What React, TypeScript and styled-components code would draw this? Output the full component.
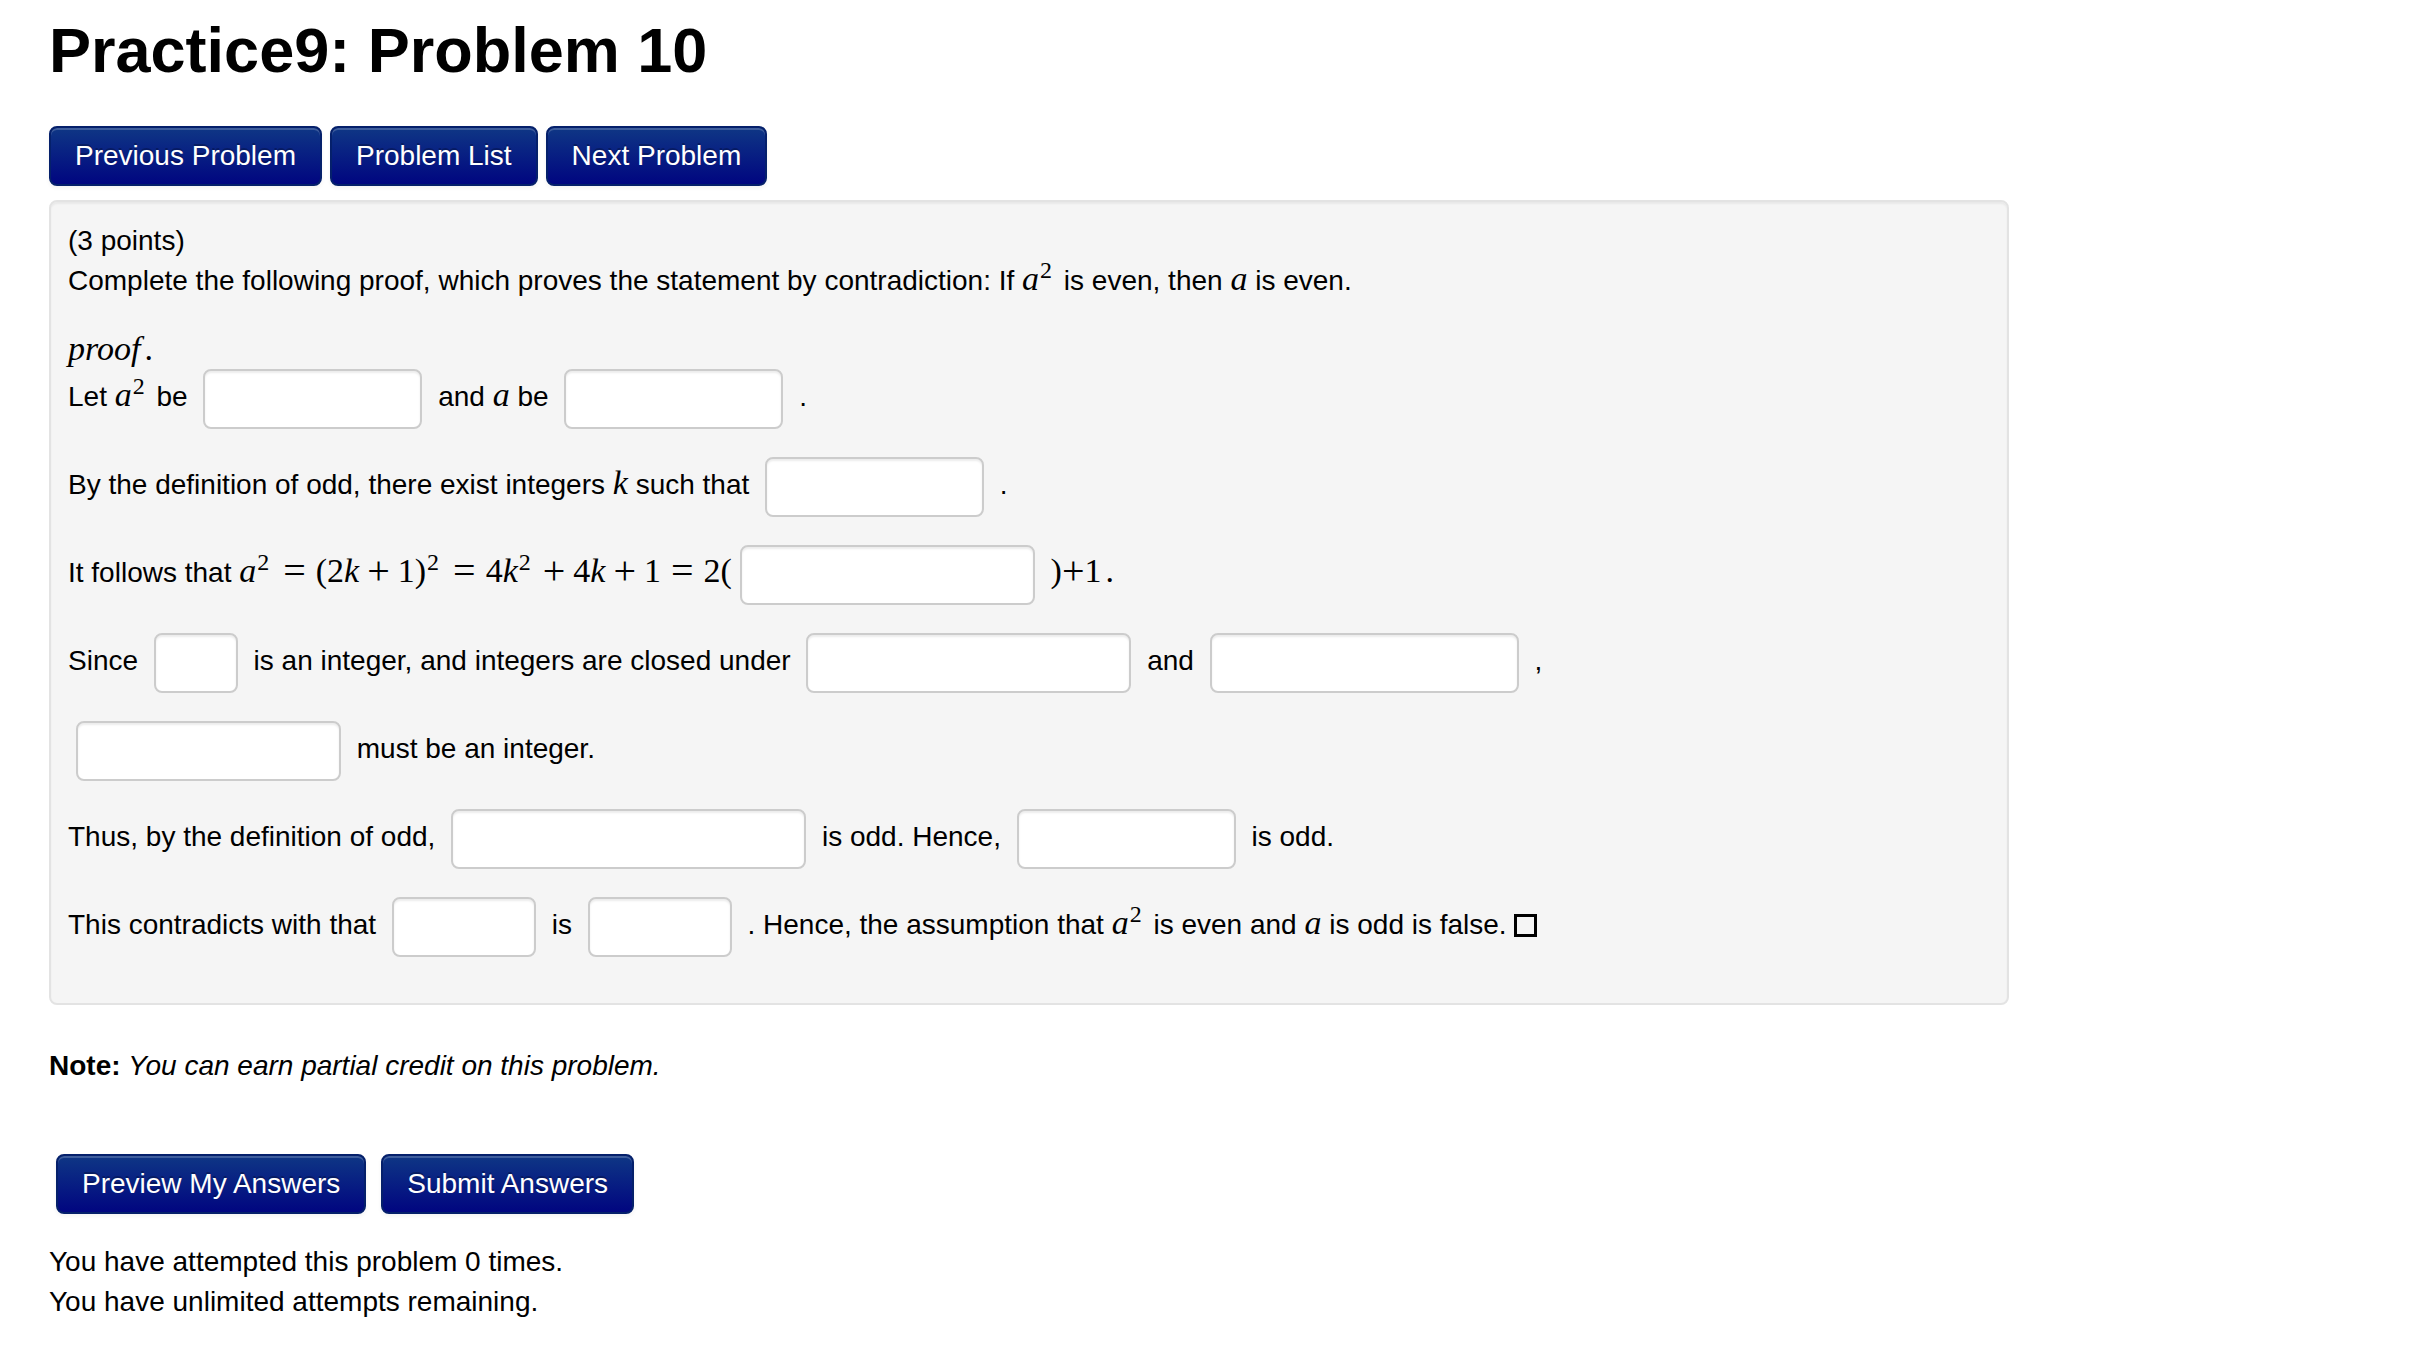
import React from "react";
import styled, { createGlobalStyle } from "styled-components";

const GlobalStyle = createGlobalStyle`
  *, *::before, *::after { box-sizing: border-box; }
  body {
    margin: 0;
    background: #fff;
    color: #000;
    font-family: "Liberation Sans", Arial, sans-serif;
    font-size: 28px;
    line-height: 40px;
  }
`;

const Page = styled.main`
  padding: 10px 15px 30px 49px;
`;

const Title = styled.h1`
  margin: 0 0 36px;
  font-size: 63px;
  line-height: 80px;
  font-weight: 700;
`;

const Nav = styled.nav`
  display: flex;
  flex-wrap: wrap;
  gap: 8px;
  margin-bottom: 14px;
`;

const Button = styled.button`
  padding: 8px 24px;
  border: 2px solid #05206b;
  border-radius: 8px;
  background: linear-gradient(to bottom, #0f3885, #000480) border-box;
  box-shadow: inset 0 2px 0 rgba(255, 255, 255, 0.2), 0 2px 4px rgba(0, 0, 0, 0.05);
  color: #fff;
  font: inherit;
  text-shadow: 0 -2px 0 rgba(0, 0, 0, 0.25);
  cursor: pointer;
`;

const Problem = styled.section`
  width: 83%;
  padding: 19px 17px 18px;
  border: 2px solid #e3e3e3;
  border-radius: 8px;
  background: #f5f5f5;
  box-shadow: inset 0 2px 2px rgba(0, 0, 0, 0.05);
`;

const Line = styled.p`
  margin: 0 0 28px;
`;

const Blank = styled.input<{ $width: number }>`
  width: ${(p) => p.$width}px;
  height: 60px;
  margin: 0 8px;
  padding: 8px 12px;
  border: 2px solid #ccc;
  border-radius: 8px;
  background: #fff;
  box-shadow: inset 0 2px 2px rgba(0, 0, 0, 0.075);
  color: #555;
  font: inherit;
  vertical-align: middle;
`;

const MathText = styled.span`
  font-family: "Liberation Serif", "Times New Roman", serif;
  font-size: 34px;
  line-height: 0;
`;

const ProofHeading = styled.div`
  font-family: "Liberation Serif", "Times New Roman", serif;
  font-size: 34px;
`;

const Var = styled.i`
  font-family: "Liberation Serif", "Times New Roman", serif;
  font-size: 34px;
  line-height: 0;
`;

const Power = styled.sup`
  margin: 0 4px 0 1px;
  font-family: "Liberation Serif", "Times New Roman", serif;
  font-size: 24px;
  font-style: normal;
  line-height: 0;
  vertical-align: 12px;
`;

const Operator = styled.span<{ $gap: number }>`
  margin: 0 ${(p) => p.$gap}px;
  font-size: 40px;
  line-height: 0;
  vertical-align: -2px;
`;

const FullStop = styled.span`
  margin-left: 4px;
`;

const EndMark = styled.span`
  display: inline-block;
  width: 23px;
  height: 23px;
  border: 3px solid #000;
  vertical-align: -3px;
`;

const Note = styled.p`
  margin: 41px 0 68px;
`;

const Actions = styled.div`
  display: flex;
  flex-wrap: wrap;
  gap: 15px;
  margin: 0 0 28px 7px;
`;

const Status = styled.p`
  margin: 0;
`;

const ASquared = () => (
  <>
    <Var>a</Var>
    <Power>2</Power>
  </>
);

const Equals = () => <Operator $gap={10}>=</Operator>;
const Plus = () => <Operator $gap={8}>+</Operator>;

export default function App() {
  return (
    <>
      <GlobalStyle />
      <Page>
        <Title>Practice9: Problem 10</Title>
        <Nav aria-label="Problem navigation">
          <Button type="button">Previous Problem</Button>
          <Button type="button">Problem List</Button>
          <Button type="button">Next Problem</Button>
        </Nav>

        <form onSubmit={(e) => e.preventDefault()}>
          <Problem>
            <Line>
              (3 points)
              <br />
              Complete the following proof, which proves the statement by contradiction: If <ASquared /> is even,
              then <Var>a</Var> is even.
            </Line>
            <ProofHeading>
              <Var>proof</Var>
              <FullStop>.</FullStop>
            </ProofHeading>
            <Line>
              Let <ASquared /> be <Blank $width={219} aria-label="a squared is" /> and <Var>a</Var> be{" "}
              <Blank $width={219} aria-label="a is" /> .
            </Line>
            <Line>
              By the definition of odd, there exist integers <Var>k</Var> such that{" "}
              <Blank $width={219} aria-label="definition of odd" /> .
            </Line>
            <Line>
              It follows that{" "}
              <MathText>
                <ASquared />
                <Equals />
                (2<Var>k</Var>
                <Plus />
                1)<Power>2</Power>
                <Equals />4<Var>k</Var>
                <Power>2</Power>
                <Plus />4<Var>k</Var>
                <Plus />1<Equals />
                2(
              </MathText>
              <Blank $width={295} aria-label="factor" />{" "}
              <MathText>
                )<Operator $gap={0}>+</Operator>1<FullStop>.</FullStop>
              </MathText>
            </Line>
            <Line>
              Since <Blank $width={84} aria-label="integer" /> is an integer, and integers are closed under{" "}
              <Blank $width={325} aria-label="first operation" /> and{" "}
              <Blank $width={309} aria-label="second operation" /> ,
            </Line>
            <Line>
              <Blank $width={265} aria-label="resulting integer" /> must be an integer.
            </Line>
            <Line>
              Thus, by the definition of odd, <Blank $width={355} aria-label="odd expression" /> is odd. Hence,{" "}
              <Blank $width={219} aria-label="odd value" /> is odd.
            </Line>
            <Line>
              This contradicts with that <Blank $width={144} aria-label="contradicted value" /> is{" "}
              <Blank $width={144} aria-label="contradicted property" /> . Hence, the assumption that <ASquared /> is
              even and <Var>a</Var> is odd is false. <EndMark role="img" aria-label="end of proof" />
            </Line>
          </Problem>

          <Note>
            <b>Note:</b> <i>You can earn partial credit on this problem.</i>
          </Note>

          <Actions>
            <Button type="button">Preview My Answers</Button>
            <Button type="submit">Submit Answers</Button>
          </Actions>
        </form>

        <Status>
          You have attempted this problem 0 times.
          <br />
          You have unlimited attempts remaining.
        </Status>
      </Page>
    </>
  );
}
